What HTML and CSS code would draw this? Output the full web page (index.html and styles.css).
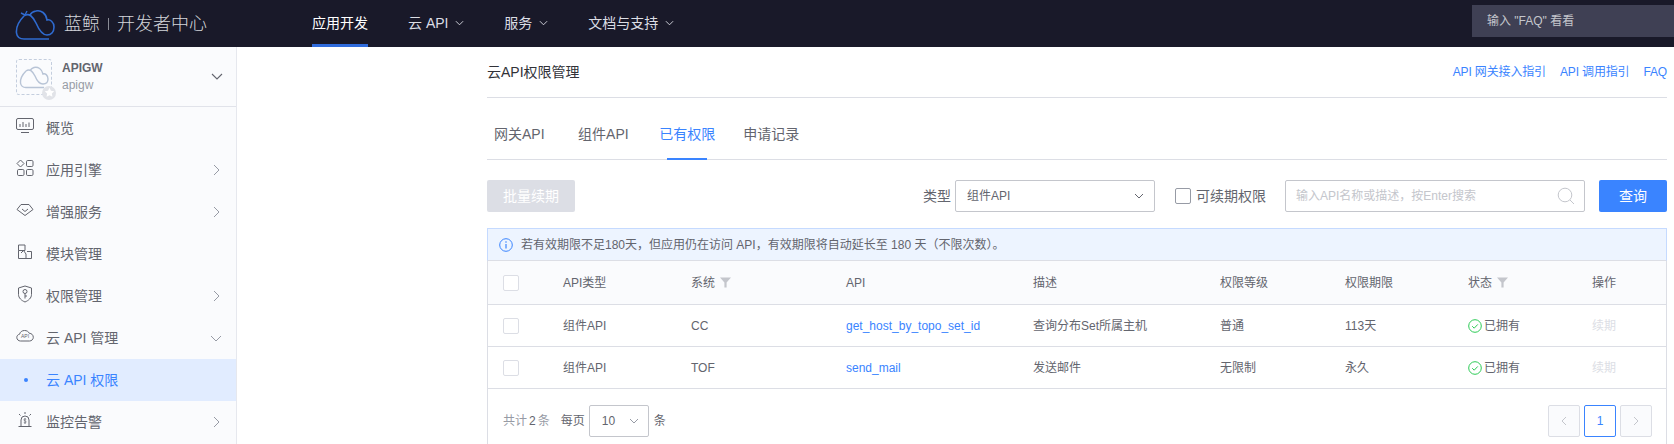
FILE: index.html

```html
<!DOCTYPE html>
<html lang="zh-CN">
<head>
  <meta charset="UTF-8" />
  <title>云API权限管理</title>
  <link rel="stylesheet" href="styles.css">
</head>
<body>
  <header class="topbar">
    <div class="logo">
      <svg class="logo-mark" viewBox="0 0 40 32" width="40" height="32"><path d="M9 8 C3 14 1 20 1.5 25 C2 29 5 31 9 31 L34 31" fill="none" stroke="#2f6bd0" stroke-width="1.6"/><path d="M9 8 C14 4 18 9 21 15 C24 22 28 27 32 27 C36 27 39 24 39 19 C39 14 35 11 32 12 C31 5 26 2 21 3 C18 3.5 16 5 15 7" fill="none" stroke="#2f6bd0" stroke-width="1.6"/><path d="M10 7 L12 3 M10 7 L6 5" stroke="#2f6bd0" stroke-width="1.4"/></svg>
      <span class="logo-name">蓝鲸</span>
      <span class="logo-sep"></span>
      <span class="logo-name">开发者中心</span>
    </div>
    <nav class="nav">
      <a class="nav-item active">应用开发</a>
      <a class="nav-item">云 API <svg class="nav-arrow" viewBox="0 0 10 6"><path d="M1 1l4 4 4-4" fill="none" stroke="#dcdee5"/></svg></a>
      <a class="nav-item">服务 <svg class="nav-arrow" viewBox="0 0 10 6"><path d="M1 1l4 4 4-4" fill="none" stroke="#dcdee5"/></svg></a>
      <a class="nav-item">文档与支持 <svg class="nav-arrow" viewBox="0 0 10 6"><path d="M1 1l4 4 4-4" fill="none" stroke="#dcdee5"/></svg></a>
    </nav>
    <div class="top-search">输入 "FAQ" 看看</div>
  </header>

  <div class="page">
    <aside class="sidebar">
      <div class="app-head">
        <div class="app-icon">
          <svg viewBox="0 0 30 24" width="30" height="24"><path d="M7 6 C3 10 1 14 1.5 18 C2 21 4 22.500 7 22.500 L25 22.500" fill="none" stroke="#b8c4d6" stroke-width="1.4"/><path d="M7 6 C11 3 14 7 16 11 C18 16 21 19 24 19 C27 19 29 17 29 14 C29 10 26 8 24 9 C23 4 19 1.500 15 2.500 C13 3 12 4 11 5.500" fill="none" stroke="#b8c4d6" stroke-width="1.4"/></svg>
          <span class="app-badge"><svg viewBox="0 0 12 12" width="11" height="11"><path d="M6 .8l1.600 3.300 3.600.5-2.600 2.500.6 3.600L6 9l-3.200 1.700.6-3.600L.8 4.600l3.600-.5z" fill="#fff"/></svg></span>
        </div>
        <div class="app-text">
          <div class="app-name">APIGW</div>
          <div class="app-code">apigw</div>
        </div>
        <svg class="app-arrow" viewBox="0 0 12 7"><path d="M1 1l5 5 5-5" fill="none" stroke="#63656e" stroke-width="1.100"/></svg>
      </div>

      <div class="menu-item">
        <svg class="menu-icon" viewBox="0 0 18 18"><rect x=".5" y="1.500" width="17" height="11" rx="1.500" fill="none" stroke="#63656e"/><path d="M4 10V7M7 10V5M10 10V7M13 10V5.500M5 15.500h8" fill="none" stroke="#63656e"/></svg>
        <span>概览</span>
      </div>
      <div class="menu-item">
        <svg class="menu-icon" viewBox="0 0 18 18"><path d="M4.500 1l3.500 3.500L4.500 8 1 4.500z" fill="none" stroke="#63656e"/><rect x="10.500" y="1.500" width="6.500" height="6" rx="1.200" fill="none" stroke="#63656e"/><rect x="1.500" y="10.500" width="6.500" height="6" rx="1.200" fill="none" stroke="#63656e"/><rect x="10.500" y="10.500" width="6.500" height="6" rx="1.200" fill="none" stroke="#63656e"/></svg>
        <span>应用引擎</span>
        <svg class="menu-arrow" viewBox="0 0 7 12"><path d="M1 1l5 5-5 5" fill="none" stroke="#979ba5"/></svg>
      </div>
      <div class="menu-item">
        <svg class="menu-icon" viewBox="0 0 18 18"><path d="M5 3.500h8L17 8.500 9 14.500 1 8.500z" fill="none" stroke="#63656e"/><path d="M6 8l3 2.500L12 8" fill="none" stroke="#63656e"/></svg>
        <span>增强服务</span>
        <svg class="menu-arrow" viewBox="0 0 7 12"><path d="M1 1l5 5-5 5" fill="none" stroke="#979ba5"/></svg>
      </div>
      <div class="menu-item">
        <svg class="menu-icon" viewBox="0 0 18 18"><path d="M2.500 2h6.500v5.500H2.500zM2.500 7.500v8h13V8.500H11" fill="none" stroke="#63656e"/><path d="M5 10l2.500-2.500L10 11v4.500" fill="none" stroke="#63656e"/></svg>
        <span>模块管理</span>
      </div>
      <div class="menu-item">
        <svg class="menu-icon" viewBox="0 0 18 18"><path d="M9 1l6.500 2v6.500c0 3.500-3 6-6.500 7.500-3.500-1.500-6.500-4-6.500-7.500V3z" fill="none" stroke="#63656e"/><circle cx="9" cy="6.500" r="2" fill="none" stroke="#63656e"/><path d="M9 8.500v5M9 11h2" fill="none" stroke="#63656e"/></svg>
        <span>权限管理</span>
        <svg class="menu-arrow" viewBox="0 0 7 12"><path d="M1 1l5 5-5 5" fill="none" stroke="#979ba5"/></svg>
      </div>
      <div class="menu-item">
        <svg class="menu-icon" viewBox="0 0 18 18"><path d="M4.500 14C2.500 14 .8 12.500.8 10.500c0-1.800 1.200-3 2.800-3.300C4 5 6 3.500 8.500 3.500c2.200 0 4 1 4.800 2.800 2.300 0 4 1.700 4 4 0 2-1.700 3.700-3.800 3.700z" fill="none" stroke="#63656e"/><text class="icon-api" x="9" y="11">API</text></svg>
        <span>云 API 管理</span>
        <svg class="menu-arrow-down" viewBox="0 0 12 7"><path d="M1 1l5 5 5-5" fill="none" stroke="#979ba5"/></svg>
      </div>
      <div class="menu-item current">
        <i class="menu-dot"></i>
        <span>云 API 权限</span>
      </div>
      <div class="menu-item">
        <svg class="menu-icon" viewBox="0 0 18 18"><path d="M5 15.500V9a4 4 0 0 1 8 0v6.500M2.500 15.500h13M9 1v2M3 3l1.500 1.500M15 3l-1.500 1.500" fill="none" stroke="#63656e"/><path d="M9 7v6M7.800 11.500c1 .6 2.400.4 2.400-.6S7.800 9.900 7.800 8.900s1.400-1.200 2.400-.6" fill="none" stroke="#63656e" stroke-width=".7"/></svg>
        <span>监控告警</span>
        <svg class="menu-arrow" viewBox="0 0 7 12"><path d="M1 1l5 5-5 5" fill="none" stroke="#979ba5"/></svg>
      </div>
    </aside>

    <main class="content">
      <div class="title-row">
        <h1>云API权限管理</h1>
        <div class="title-links">
          <a>API 网关接入指引</a>
          <a>API 调用指引</a>
          <a>FAQ</a>
        </div>
      </div>

      <div class="tabs">
        <a class="tab tab-gateway">网关API</a>
        <a class="tab tab-comp">组件API</a>
        <a class="tab tab-owned active">已有权限</a>
        <a class="tab tab-record">申请记录</a>
      </div>

      <div class="toolbar">
        <button class="btn-renew">批量续期</button>
        <div class="filters">
          <label class="filter-label">类型</label>
          <div class="select">
            <span>组件API</span>
            <svg class="select-arrow" viewBox="0 0 10 6"><path d="M1 1l4 4 4-4" fill="none" stroke="#63656e"/></svg>
          </div>
          <label class="check-label"><i class="check"></i>可续期权限</label>
          <div class="search">
            <span>输入API名称或描述，按Enter搜索</span>
            <svg class="search-icon" viewBox="0 0 18 18" width="18" height="18"><circle cx="8" cy="8" r="6.800" fill="none" stroke="#c4c6cc"/><path d="M13 13l4 4" stroke="#c4c6cc"/></svg>
          </div>
          <button class="btn-query">查询</button>
        </div>
      </div>

      <div class="alert">
        <svg class="alert-icon" viewBox="0 0 14 14" width="14" height="14"><circle cx="7" cy="7" r="6.300" fill="none" stroke="#3a84ff"/><circle cx="7" cy="4" r=".8" fill="#3a84ff"/><path d="M7 6v4.500" stroke="#3a84ff" stroke-width="1.200"/></svg>
        若有效期限不足180天，但应用仍在访问 API，有效期限将自动延长至 180 天（不限次数）。
      </div>

      <div class="table-wrap">
        <table class="perm-table">
          <colgroup>
            <col class="c-check"><col class="c-type"><col class="c-sys"><col class="c-api"><col class="c-desc"><col class="c-level"><col class="c-term"><col class="c-status"><col>
          </colgroup>
          <thead>
            <tr>
              <th><i class="check light"></i></th>
              <th>API类型</th>
              <th>系统 <svg class="funnel" viewBox="0 0 10 10"><path d="M0 .5h10L6 5v4.500H4V5z" fill="#c4c6cc"/></svg></th>
              <th>API</th>
              <th>描述</th>
              <th>权限等级</th>
              <th>权限期限</th>
              <th>状态 <svg class="funnel" viewBox="0 0 10 10"><path d="M0 .5h10L6 5v4.500H4V5z" fill="#c4c6cc"/></svg></th>
              <th>操作</th>
            </tr>
          </thead>
          <tbody>
            <tr>
              <td><i class="check light"></i></td>
              <td>组件API</td>
              <td>CC</td>
              <td><a class="api-link">get_host_by_topo_set_id</a></td>
              <td>查询分布Set所属主机</td>
              <td>普通</td>
              <td>113天</td>
              <td><svg class="ok" viewBox="0 0 14 14"><circle cx="7" cy="7" r="6.300" fill="none" stroke="#2dcb56"/><path d="M4.200 7.200l2 2 3.600-3.800" fill="none" stroke="#2dcb56"/></svg>已拥有</td>
              <td class="disabled">续期</td>
            </tr>
            <tr>
              <td><i class="check light"></i></td>
              <td>组件API</td>
              <td>TOF</td>
              <td><a class="api-link">send_mail</a></td>
              <td>发送邮件</td>
              <td>无限制</td>
              <td>永久</td>
              <td><svg class="ok" viewBox="0 0 14 14"><circle cx="7" cy="7" r="6.300" fill="none" stroke="#2dcb56"/><path d="M4.200 7.200l2 2 3.600-3.800" fill="none" stroke="#2dcb56"/></svg>已拥有</td>
              <td class="disabled">续期</td>
            </tr>
          </tbody>
        </table>

        <div class="pager-row">
          <div class="pager-info">
            <span class="total">共计<b>2</b>条</span>
            <span>每页</span>
            <div class="size-select">
              <span>10</span>
              <svg class="select-arrow" viewBox="0 0 10 6"><path d="M1 1l4 4 4-4" fill="none" stroke="#979ba5"/></svg>
            </div>
            <span>条</span>
          </div>
          <div class="pager">
            <span class="page-btn off"><svg viewBox="0 0 6 10" width="6" height="10"><path d="M5 1L1 5l4 4" fill="none" stroke="#c4c6cc"/></svg></span>
            <span class="page-btn on">1</span>
            <span class="page-btn off"><svg viewBox="0 0 6 10" width="6" height="10"><path d="M1 1l4 4-4 4" fill="none" stroke="#c4c6cc"/></svg></span>
          </div>
        </div>
      </div>
    </main>
  </div>
</body>
</html>
```

FILE: styles.css

```css
* {
  box-sizing: border-box;
}

html, body {
  margin: 0;
  height: 100%;
  overflow: hidden;
  font-family: "Liberation Sans", "Noto Sans CJK SC", sans-serif;
  font-size: 12px;
  line-height: 16px;
  color: #63656e;
  background: #fff;
}

.topbar {
  height: 47px;
  background-color: #191929;
  display: flex;
  align-items: center;
  padding-left: 15px;
}

.logo {
  display: flex;
  align-items: center;
  width: 297px;
  height: 100%;
}

.logo-mark {
  margin-right: 9px;
}

.logo-name {
  font-size: 18px;
  line-height: 24px;
  color: #d3d5da;
  font-weight: 300;
}

.logo-sep {
  width: 1px;
  height: 12px;
  background: #8a8c96;
  margin: 0 8px;
}

.nav {
  display: flex;
  gap: 40px;
  height: 100%;
}

.nav-item {
  display: flex;
  align-items: center;
  font-size: 14px;
  color: #dcdee5;
  border-bottom: 3px solid transparent;
  padding-top: 1px;
  white-space: pre;
}

.nav-item.active {
  color: #fff;
  border-bottom-color: #2f6bdc;
}

.nav-arrow {
  width: 9px;
  height: 6px;
  margin-left: 3px;
}

.top-search {
  margin-left: auto;
  width: 202px;
  height: 32px;
  margin-top: -5px;
  background: #3f4054;
  color: #c4c6cc;
  line-height: 32px;
  padding-left: 15px;
}

.page {
  display: flex;
  height: 397px;
}

.sidebar {
  width: 237px;
  flex-shrink: 0;
  background: #fafbfd;
  border-right: 1px solid #e6e8ee;
}

.app-head {
  height: 60px;
  border-bottom: 1px solid #e1e3ea;
  display: flex;
  align-items: center;
  padding: 0 13px 0 16px;
}

.app-icon {
  position: relative;
  width: 36px;
  height: 36px;
  border: 1px dashed #c4cede;
  border-radius: 3px;
  display: flex;
  align-items: center;
  justify-content: center;
  margin-right: 10px;
}

.app-badge {
  position: absolute;
  right: -5px;
  bottom: -6px;
  width: 14px;
  height: 14px;
  border-radius: 50%;
  background: #e1e3e8;
  display: flex;
  align-items: center;
  justify-content: center;
}

.app-name {
  font-weight: bold;
  color: #63656e;
  line-height: 17px;
}

.app-code {
  color: #979ba5;
  line-height: 17px;
}

.app-arrow {
  margin-left: auto;
  width: 12px;
  height: 7px;
}

.menu-item {
  height: 42px;
  display: flex;
  align-items: center;
  padding-left: 16px;
  padding-bottom: 1px;
  font-size: 14px;
  color: #63656e;
  position: relative;
}

.menu-icon {
  width: 18px;
  height: 18px;
  margin-right: 12px;
  margin-bottom: 3px;
  flex-shrink: 0;
}

.icon-api {
  font-size: 5px;
  fill: #63656e;
  text-anchor: middle;
}

.menu-arrow {
  position: absolute;
  left: 213px;
  width: 7px;
  height: 12px;
  margin-top: 1px;
}

.menu-arrow-down {
  position: absolute;
  left: 210px;
  width: 12px;
  height: 7px;
  margin-top: 1px;
}

.menu-item.current {
  background: #e1ecff;
  color: #3a84ff;
}

.menu-dot {
  width: 4px;
  height: 4px;
  border-radius: 50%;
  background: #3a84ff;
  margin: 0 18px 0 8px;
}

.content {
  flex: 1;
  padding: 0 7px 0 250px;
  min-width: 0;
}

.title-row {
  height: 51px;
  border-bottom: 1px solid #dcdee5;
  display: flex;
  justify-content: space-between;
  align-items: center;
}

.title-row h1 {
  margin: 0;
  font-size: 14px;
  font-weight: normal;
  color: #313238;
}

.title-links {
  display: flex;
  gap: 14px;
  color: #3a84ff;
  letter-spacing: -0.15px;
}

.tabs {
  height: 62px;
  border-bottom: 1px solid #dcdee5;
  display: flex;
  padding-left: 7px;
}

.tab {
  font-size: 14px;
  line-height: 20px;
  padding-top: 26px;
  color: #63656e;
  position: relative;
  margin-right: 33.5px;
}

.tab.tab-comp {
  margin-right: 30.5px;
}

.tab.active {
  color: #3a84ff;
  margin-right: 28px;
}

.tab.active::after {
  content: "";
  position: absolute;
  left: 8px;
  right: 8px;
  bottom: -1px;
  height: 2px;
  background: #3a84ff;
}

.toolbar {
  margin-top: 20px;
  display: flex;
  justify-content: space-between;
  height: 32px;
}

.btn-renew {
  width: 88px;
  height: 32px;
  border: none;
  border-radius: 2px;
  background: #dcdee5;
  color: #fff;
  font: inherit;
  font-size: 14px;
}

.filters {
  display: flex;
  align-items: center;
}

.filter-label {
  font-size: 14px;
  margin-right: 4px;
}

.select {
  width: 200px;
  height: 32px;
  border: 1px solid #c4c6cc;
  border-radius: 2px;
  display: flex;
  align-items: center;
  justify-content: space-between;
  padding: 0 10px 0 11px;
}

.select-arrow {
  width: 10px;
  height: 6px;
}

.check-label {
  display: flex;
  align-items: center;
  font-size: 14px;
  margin: 0 19px 0 20px;
}

.check {
  display: block;
  width: 16px;
  height: 16px;
  border: 1px solid #979ba5;
  border-radius: 2px;
  background: #fff;
}

.check-label .check {
  margin-right: 5px;
}

.check.light {
  border-color: #dcdee5;
}

.search {
  width: 300px;
  height: 32px;
  border: 1px solid #c4c6cc;
  border-radius: 2px;
  display: flex;
  align-items: center;
  justify-content: space-between;
  padding: 0 9px 0 10px;
  color: #c4c6cc;
}

.btn-query {
  width: 68px;
  height: 32px;
  margin-left: 14px;
  border: none;
  border-radius: 2px;
  background: #3a84ff;
  color: #fff;
  font: inherit;
  font-size: 14px;
}

.alert {
  margin-top: 16px;
  height: 33px;
  background: #edf4ff;
  border: 1px solid #c5daff;
  border-bottom-color: #dcdee5;
  display: flex;
  align-items: center;
  padding: 1px 0 0 11px;
  color: #63656e;
}

.alert-icon {
  margin-right: 8px;
}

.table-wrap {
  border: 1px solid #dcdee5;
  border-top: none;
}

.perm-table {
  width: 100%;
  border-collapse: collapse;
  table-layout: fixed;
}

.c-check { width: 60px; }
.c-type { width: 128px; }
.c-sys { width: 155px; }
.c-api { width: 187px; }
.c-desc { width: 187px; }
.c-level { width: 125px; }
.c-term { width: 123px; }
.c-status { width: 124px; }

.perm-table th,
.perm-table td {
  height: 42px;
  padding: 2px 15px 0;
  text-align: left;
  font-weight: normal;
  color: #63656e;
  border-bottom: 1px solid #dcdee5;
  white-space: nowrap;
}

.perm-table th {
  height: 43px;
  background: #fafbfd;
}

.funnel {
  width: 11px;
  height: 11px;
  margin-left: 2px;
  vertical-align: -1px;
}

.api-link {
  color: #3a84ff;
}

.ok {
  width: 14px;
  height: 14px;
  margin-right: 2px;
  vertical-align: -3px;
}

.perm-table td.disabled {
  color: #dcdee5;
}

.pager-row {
  height: 64px;
  display: flex;
  justify-content: space-between;
  padding: 16px 14px 0 15px;
}

.pager-info {
  display: flex;
  align-items: center;
  height: 32px;
}

.total {
  color: #979ba5;
  margin-right: 11px;
}

.total b {
  font-weight: normal;
  color: #63656e;
  margin: 0 2px;
}

.size-select {
  width: 60px;
  height: 32px;
  border: 1px solid #c4c6cc;
  border-radius: 2px;
  display: flex;
  align-items: center;
  justify-content: space-between;
  padding: 0 9px 0 12px;
  margin: 0 5px 0 4px;
}

.pager {
  display: flex;
  gap: 4px;
}

.page-btn {
  width: 32px;
  height: 32px;
  border: 1px solid #dcdee5;
  border-radius: 2px;
  display: flex;
  align-items: center;
  justify-content: center;
}

.page-btn.off {
  background: #fafbfd;
}

.page-btn.on {
  border-color: #3a84ff;
  color: #3a84ff;
}
```
